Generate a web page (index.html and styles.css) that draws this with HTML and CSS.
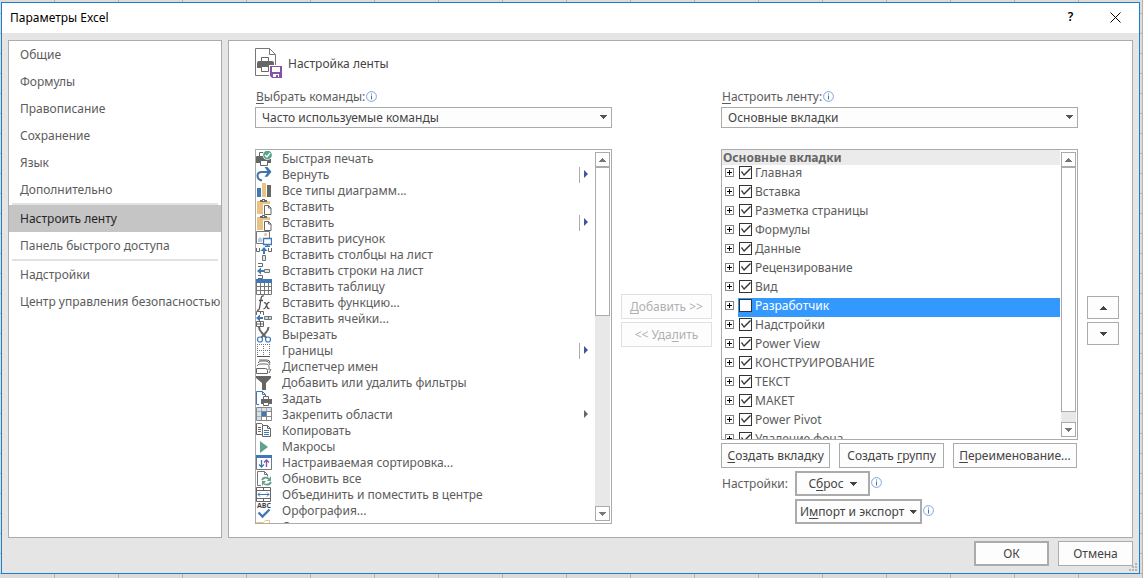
FILE: index.html
```html
<!DOCTYPE html>
<html lang="ru">
<head>
<meta charset="utf-8">
<title>Параметры Excel</title>
<link rel="stylesheet" href="styles.css">
</head>
<body>
<svg class="defs" aria-hidden="true">
  <symbol id="info" viewBox="0 0 11 11"><circle cx="5.5" cy="5.5" r="4.9" fill="#fff" stroke="#7fa3d6"/><path d="M5 2.5h1v1H5zM5 4.5h1v4H5z" fill="#3f74bd"/></symbol>
  <symbol id="down" viewBox="0 0 7 4"><path d="M0 0h7v1H6v1H5v1H4v1H3V3H2V2H1V1H0z" fill="currentColor"/></symbol>
  <symbol id="up" viewBox="0 0 7 4"><path d="M0 4h7V3H6V2H5V1H4V0H3v1H2v1H1v1H0z" fill="currentColor"/></symbol>
  <symbol id="paste" viewBox="0 0 16 16"><path d="M1 2h13v4H7v9H1z" fill="#eac282"/><path d="M4 3V1h2V0h3v1h2v2z" fill="#666"/><path d="M7 1h1v1H7z" fill="#fff"/><path d="M7 5h9v11H7z" fill="#fff"/><path d="M8.500 6.500h4l2.500 2.500v6.500H8.500zM12.500 6.500V9H15" fill="#fff" stroke="#666"/></symbol>
</svg>
<div class="dialog" role="dialog" aria-label="Параметры Excel">
  <header class="titlebar">
    <h1 class="caption">Параметры Excel</h1>
    <button class="tool help" aria-label="Справка">?</button>
    <button class="tool" aria-label="Закрыть"><svg width="11" height="11" viewBox="0 0 11 11"><path d="M.5.5l10 10M10.500.5l-10 10" stroke="#000"/></svg></button>
  </header>
  <div class="content">
    <nav class="sidebar">
      <a href="#general">Общие</a>
      <a href="#formulas">Формулы</a>
      <a href="#proofing">Правописание</a>
      <a href="#save">Сохранение</a>
      <a href="#language">Язык</a>
      <a href="#advanced">Дополнительно</a>
      <hr>
      <a href="#ribbon" class="current">Настроить ленту</a>
      <a href="#quick">Панель быстрого доступа</a>
      <hr>
      <a href="#addins">Надстройки</a>
      <a href="#trust">Центр управления безопасностью</a>
    </nav>
    <main class="panel">
      <div class="heading">
        <svg width="27" height="31" viewBox="0 0 27 31"><path d="M.5.5h14l6 6v21H.5z" fill="#fff" stroke="#777"/><path d="M14.500.5v6h6" fill="none" stroke="#777"/><path d="M4 13h13q2 0 2 2v5H2v-5q0-2 2-2z" fill="#666"/><path d="M6.500 9.500h7v4h-7zM6.500 18.500h7v5h-7z" fill="#fff" stroke="#666"/><path d="M14 17h13v14H14z" fill="#fff"/><path d="M15 18h12v12H17l-2-2z" fill="#8552a8"/><path d="M17 19h8v5h-8zM18 26h6v3h-1v-2h-2v2h-3z" fill="#fff"/></svg>
        <h2>Настройка ленты</h2>
      </div>
      <div class="columns">
        <section class="column">
          <div class="label-row"><label for="source"><u>В</u>ыбрать команды:</label><svg class="info"><use href="#info"/></svg></div>
          <div class="combo"><select id="source"><option>Часто используемые команды</option></select><svg class="arrow"><use href="#down"/></svg></div>
          <div class="list commands-list">
            <ul class="commands">
              <li><svg viewBox="0 0 16 16"><path d="M3.500 6V1.500h6V6" fill="#fff" stroke="#666"/><path d="M1 5h13q1 0 1 1v6H0V6q0-1 1-1z" fill="#666"/><path d="M4.500 9.500h7v5h-7z" fill="#fff" stroke="#666"/><circle cx="11.500" cy="4" r="5" fill="#fff"/><circle cx="11.500" cy="4" r="4.400" fill="#57a488"/><path d="M9 4l2 2 3-4" fill="none" stroke="#fff" stroke-width="1.300"/></svg>Быстрая печать</li>
              <li class="split"><svg viewBox="0 0 16 16"><path d="M6 13.500C0 12 0 5 6 5h6" fill="none" stroke="#3f74ad" stroke-width="2"/><path d="M8.500 0h3l4 4.700-4 5h-3L12 5z" fill="#3f74ad"/></svg>Вернуть<i></i></li>
              <li><svg viewBox="0 0 16 16"><path d="M1 5h4v9H1z" fill="#3f78b5"/><path d="M6 0h4v14H6z" fill="#eac282"/><path d="M11 2h4v12h-4z" fill="#666"/></svg>Все типы диаграмм...</li>
              <li><svg><use href="#paste"/></svg>Вставить</li>
              <li class="split"><svg><use href="#paste"/></svg>Вставить<i></i></li>
              <li><svg viewBox="0 0 16 16"><path d="M8 12.500H.5v-12h13V8" fill="#fff" stroke="#777"/><circle cx="9.500" cy="3.500" r="1.500" fill="#eac282"/><path d="M2 11V8l2-2 2 2v3z" fill="#b5cbe2"/><path d="M7.500 7.500h8v6h-8zM11.500 13.500v2M9 15.500h5" fill="#fff" stroke="#3f78b5" stroke-width="1.300"/></svg>Вставить рисунок</li>
              <li><svg viewBox="0 0 16 16"><path d="M.5 1v3.500h3V1M12.500 1v3.500h3V1" fill="none" stroke="#666"/><path d="M8 0l3.500 4H9v3H7V4H4.500z" fill="#3f78b5"/><path d="M6.500 8.500h3v5h-3z" fill="#dbe5f0" stroke="#777"/></svg>Вставить столбцы на лист</li>
              <li><svg viewBox="0 0 16 16"><path d="M2 .5h4.500v3H2M2 12.500h4.500v3H2" fill="none" stroke="#666"/><path d="M1 8l4-3.500V7h3v2H5v2.500z" fill="#3f78b5"/><path d="M8.500 6.500h5v3h-5z" fill="#dbe5f0" stroke="#777"/></svg>Вставить строки на лист</li>
              <li><svg viewBox="0 0 16 16"><path d="M.5.5h15v15H.5zM1 7.500h14M1 11.500h14M4.500 4v11M8.500 4v11M12.500 4v11" fill="#fff" stroke="#777"/><path d="M0 0h16v4H0z" fill="#3f78b5"/></svg>Вставить таблицу</li>
              <li><svg viewBox="0 0 16 16"><path d="M8 1Q5.500 0 5 4L3.500 13Q3 16 1 15M3 5.500h4M8 8q2-1 2.500 2l1 3q.5 1 2 0M13.500 7.500q-1-.5-2 1l-2 4q-1 1.500-2 1" fill="none" stroke="#555" stroke-width="1.300"/></svg>Вставить функцию...</li>
              <li><svg viewBox="0 0 16 16"><path d="M.5 4V.5h7V4M4.500.5V3M.5 10.500h7v5h-7zM4.500 10.500v5M.5 13h7" fill="none" stroke="#666"/><path d="M0 7l4-3.500V6h3v2H4v2.500z" fill="#3f78b5"/><path d="M8.500 5.500h7v3h-7zM12.500 5.500v3" fill="#c6d6e7" stroke="#777"/></svg>Вставить ячейки...</li>
              <li><svg viewBox="0 0 16 16"><path d="M3 0q0 3 3 6l4 4.500M12.500 0q0 3-3 6l-4 4.500" fill="none" stroke="#666" stroke-width="2"/><circle cx="4" cy="12.500" r="2.500" fill="#fff" stroke="#3f78b5" stroke-width="1.200"/><circle cx="12" cy="12.500" r="2.500" fill="#fff" stroke="#3f78b5" stroke-width="1.200"/></svg>Вырезать</li>
              <li class="split"><svg viewBox="0 0 16 16"><path d="M1 1.500h13M1 7.500h13M1.500 1v12M7.500 1v12M13.500 1v12" fill="none" stroke="#777" stroke-dasharray="1 1"/><path d="M1 13.500h13" stroke="#555"/></svg>Границы<i></i></li>
              <li><svg viewBox="0 0 16 16"><path d="M.5 9.500h9q2 0 2 2v3H.5zM1 7q1-2 3-2h6q4 0 3 6M2 4q1-2 3-2h5q3 0 4 4M3 1h8q3 0 3 3M13 14l2-4" fill="none" stroke="#666"/></svg>Диспетчер имен</li>
              <li><svg viewBox="0 0 16 16"><path d="M0 1h15v2l-5 5v7H6V8L0 3z" fill="#666"/></svg>Добавить или удалить фильтры</li>
              <li><svg viewBox="0 0 16 16"><path d="M3 13.500H.5V.5h6l3 3v2M6.500.5v3h3" fill="none" stroke="#3f78b5"/><path d="M5 8h11v5H5z" fill="#666"/><path d="M7.500 5.500h5v3h-5zM7.500 11.500h5v3h-5z" fill="#fff" stroke="#666"/></svg>Задать</li>
              <li class="sub"><svg viewBox="0 0 16 16"><path d="M.5.5h15v13H.5zM.5 4.500h15M.5 9.500h15M5.500.5v13M10.500.5v13" fill="#fff" stroke="#888"/><path d="M1 1h14v3H1zM1 4h4v9H1z" fill="#b8cbe0" opacity=".6"/><path d="M6 5h4v4H6z" fill="#3f78b5"/></svg>Закрепить области<i></i></li>
              <li><svg viewBox="0 0 16 16"><path d="M.5.5h5l2 2v9h-7zM2 4.500h3M2 6.500h3M2 8.500h3" fill="#fff" stroke="#666"/><path d="M6.500 2.500h5l3 3v8h-8zM11.500 2.500v3h3" fill="#fff" stroke="#666"/><path d="M8 7.500h5M8 9.500h5M8 11.500h5" stroke="#3f78b5"/></svg>Копировать</li>
              <li><svg viewBox="0 0 16 16"><path d="M4 2l8 6-8 6z" fill="#63a18c"/></svg>Макросы</li>
              <li><svg viewBox="0 0 16 16"><path d="M.5.5h15v14H.5z" fill="#fff" stroke="#777"/><path d="M0 0h16v3H0z" fill="#3f78b5"/><path d="M5.500 5v7M3 9.500l2.500 2.500L8 9.500" fill="none" stroke="#3f78b5" stroke-width="1.300"/><path d="M10.500 12V5M8 7.500L10.500 5 13 7.500" fill="none" stroke="#8552a8" stroke-width="1.300"/></svg>Настраиваемая сортировка...</li>
              <li><svg viewBox="0 0 16 16"><path d="M5 14.500H1.500V.5h7l3 3v2M8.500.5v3h3" fill="none" stroke="#777"/><path d="M6 9q2-4 7-1M15 11q-2 4-7 2" fill="none" stroke="#63a18c" stroke-width="1.800"/><path d="M15 5v5h-4zM6 15v-5h4z" fill="#63a18c"/></svg>Обновить все</li>
              <li><svg viewBox="0 0 16 16"><path d="M.5.5h14v14H.5zM.5 3.500h14M.5 11.500h14M7.500.5v3M7.500 11.500v3" fill="#fff" stroke="#666"/><path d="M2 7.500h11M4 5.500l-2 2 2 2M11 5.500l2 2-2 2" fill="none" stroke="#3f78b5"/></svg>Объединить и поместить в центре</li>
              <li><svg viewBox="0 0 16 16"><text x="1" y="5" class="abc">ABC</text><path d="M2.500 9.500l4 4 7-7" fill="none" stroke="#3f78b5" stroke-width="2.400"/></svg>Орфография...</li>
              <li><svg viewBox="0 0 16 16"><path d="M.5 15V3.500h7l2-2h4V15z" fill="#fff" stroke="#eac282"/></svg>Открыть</li>
            </ul>
            <div class="scrollbar"><button aria-label="Вверх"><svg><use href="#up"/></svg></button><div class="track"><div class="thumb source-thumb"></div></div><button aria-label="Вниз"><svg><use href="#down"/></svg></button></div>
          </div>
        </section>
        <div class="transfer">
          <button class="btn" disabled><span><u>Д</u>обавить &gt;&gt;</span></button>
          <button class="btn" disabled><span>&lt;&lt; Уда<u>л</u>ить</span></button>
        </div>
        <section class="column">
          <div class="label-row"><label for="target"><u>Н</u>астроить ленту:</label><svg class="info"><use href="#info"/></svg></div>
          <div class="combo"><select id="target"><option>Основные вкладки</option></select><svg class="arrow"><use href="#down"/></svg></div>
          <div class="list">
            <div class="tree">
              <h3>Основные вкладки</h3>
              <ul>
                <li><button class="plus" aria-label="Развернуть"></button><label><input type="checkbox" checked>Главная</label></li>
                <li><button class="plus" aria-label="Развернуть"></button><label><input type="checkbox" checked>Вставка</label></li>
                <li><button class="plus" aria-label="Развернуть"></button><label><input type="checkbox" checked>Разметка страницы</label></li>
                <li><button class="plus" aria-label="Развернуть"></button><label><input type="checkbox" checked>Формулы</label></li>
                <li><button class="plus" aria-label="Развернуть"></button><label><input type="checkbox" checked>Данные</label></li>
                <li><button class="plus" aria-label="Развернуть"></button><label><input type="checkbox" checked>Рецензирование</label></li>
                <li><button class="plus" aria-label="Развернуть"></button><label><input type="checkbox" checked>Вид</label></li>
                <li><button class="plus" aria-label="Развернуть"></button><label class="selected"><input type="checkbox">Разработчик</label></li>
                <li><button class="plus" aria-label="Развернуть"></button><label><input type="checkbox" checked>Надстройки</label></li>
                <li><button class="plus" aria-label="Развернуть"></button><label><input type="checkbox" checked>Power View</label></li>
                <li><button class="plus" aria-label="Развернуть"></button><label><input type="checkbox" checked>КОНСТРУИРОВАНИЕ</label></li>
                <li><button class="plus" aria-label="Развернуть"></button><label><input type="checkbox" checked>ТЕКСТ</label></li>
                <li><button class="plus" aria-label="Развернуть"></button><label><input type="checkbox" checked>МАКЕТ</label></li>
                <li><button class="plus" aria-label="Развернуть"></button><label><input type="checkbox" checked>Power Pivot</label></li>
                <li><button class="plus" aria-label="Развернуть"></button><label><input type="checkbox" checked>Удаление фона</label></li>
              </ul>
            </div>
            <div class="scrollbar"><button aria-label="Вверх"><svg><use href="#up"/></svg></button><div class="track"><div class="thumb target-thumb"></div></div><button aria-label="Вниз"><svg><use href="#down"/></svg></button></div>
          </div>
          <div class="tab-buttons">
            <button class="btn new-tab"><span><u>С</u>оздать вкладку</span></button>
            <button class="btn new-group"><span>Создать <u>г</u>руппу</span></button>
            <button class="btn rename"><span><u>П</u>ереименование...</span></button>
          </div>
          <div class="settings">
            <span class="settings-label">Настройки:</span>
            <div class="menus">
              <div class="menu-row"><button class="btn strong reset"><span>С<u>б</u>рос</span><svg class="caret"><use href="#down"/></svg></button><svg class="info"><use href="#info"/></svg></div>
              <div class="menu-row"><button class="btn strong import"><span>И<u>м</u>порт и экспорт</span><svg class="caret"><use href="#down"/></svg></button><svg class="info"><use href="#info"/></svg></div>
            </div>
          </div>
        </section>
        <div class="order">
          <button class="btn" aria-label="Переместить вверх"><svg class="caret"><use href="#up"/></svg></button>
          <button class="btn" aria-label="Переместить вниз"><svg class="caret"><use href="#down"/></svg></button>
        </div>
      </div>
    </main>
  </div>
  <footer class="footer">
    <button class="btn strong">ОК</button>
    <button class="btn">Отмена</button>
  </footer>
  <svg class="grip" width="8" height="8" viewBox="0 0 8 8"><path d="M6 0h2v2H6zM3 3h2v2H3zM6 3h2v2H6zM0 6h2v2H0zM3 6h2v2H3zM6 6h2v2H6z" fill="#b4b4b4"/></svg>
</div>
</body>
</html>
```
FILE: styles.css
```css
* { box-sizing: border-box; }

body {
  margin: 0;
  height: 100vh;
  padding: 2px 3px 4px 1px;
  display: flex;
  font: 12px/16px "Noto Sans", "Open Sans", sans-serif;
  color: #5c5c5c;
  background-color: #dcdcdc;
  background-image:
    linear-gradient(90deg, #b4b4b4 1px, transparent 1px),
    linear-gradient(#b4b4b4 1px, transparent 1px);
  background-size: 64px 64px, 20px 20px;
  background-position: 54px 0, 0 13px;
}

button, select, input { font: inherit; color: inherit; margin: 0; }
h1, h2, h3, ul { margin: 0; padding: 0; font: inherit; list-style: none; }
u { text-underline-offset: 2px; }
.defs { position: absolute; width: 0; height: 0; }

.dialog {
  position: relative;
  flex: 1;
  min-width: 0;
  display: flex;
  flex-direction: column;
  border: 1px solid #1b7fd0;
  background: #e5e5e5;
}

.titlebar {
  display: flex;
  align-items: center;
  height: 30px;
  padding: 0 8px;
  background: #fff;
  color: #000;
}
.caption { flex: 1; }
.tool {
  width: 31px;
  height: 30px;
  padding: 0 0 2px;
  border: 0;
  background: none;
  display: flex;
  align-items: center;
  justify-content: center;
}
.help { width: 59px; font-weight: 600; }

.content {
  flex: 1;
  min-height: 0;
  display: flex;
  gap: 6px;
  padding: 7px 6px 3px;
}
.sidebar, .panel { background: #fff; border: 1px solid #ababab; }
.sidebar { width: 214px; }
.sidebar a {
  display: block;
  padding: 0 0 0 11px;
  line-height: 27px;
  color: inherit;
  text-decoration: none;
  white-space: nowrap;
}
.sidebar .current { background: #c5c5c5; color: #262626; }
.sidebar hr { height: 2px; margin: 0 3px; border: 0; background: #e1e1e1; }

.panel {
  flex: 1;
  min-width: 0;
  display: flex;
  flex-direction: column;
  padding: 7px 13px 13px 26px;
}
.heading { display: flex; align-items: center; gap: 6px; margin-bottom: 9px; }
.heading h2 { color: #444; }

.columns {
  flex: 1;
  min-height: 0;
  display: grid;
  grid-template-columns: minmax(0, 1fr) 91px minmax(0, 1fr) 32px;
  grid-template-rows: minmax(0, 1fr);
  gap: 9px;
}
.column { display: flex; flex-direction: column; min-height: 0; }
.label-row { display: flex; align-items: center; gap: 1px; height: 19px; padding: 0 0 2px 1px; }
.info { width: 11px; height: 11px; }

.combo { position: relative; margin-bottom: 21px; }
.combo select {
  display: block;
  width: 100%;
  height: 21px;
  padding: 0 6px;
  appearance: none;
  border: 1px solid #ababab;
  border-radius: 0;
  background: #fdfdfd;
  color: #444;
}
.arrow { position: absolute; right: 5px; top: 8px; width: 7px; height: 4px; color: #555; pointer-events: none; }

.list {
  flex: 1;
  min-height: 0;
  display: flex;
  border: 1px solid #ababab;
  overflow: hidden;
}
.commands, .tree { flex: 1; min-width: 0; overflow: hidden; }
.tree { margin-right: 1px; }
.commands { padding-top: 1px; }
.commands li { display: flex; align-items: center; height: 16px; padding-right: 6px; white-space: nowrap; }
.commands svg { width: 16px; height: 16px; margin-right: 10px; flex: none; }
.commands i {
  margin-left: auto;
  width: 10px;
  height: 16px;
  background: #666;
  clip-path: polygon(5px 3px, 9px 7px, 5px 11px);
}
.commands .split i {
  background: linear-gradient(90deg, #ababab 2px, #3a55a5 2px);
  clip-path: polygon(0 0, 1px 0, 1px 7px, 5px 7px, 5px 3px, 9px 7px, 5px 11px, 5px 7px, 1px 7px, 1px 16px, 0 16px);
}
.abc { font: bold 7px "Open Sans", sans-serif; fill: #444; }

.scrollbar { width: 15px; margin: 2px 1px 2px 0; display: flex; flex-direction: column; background: #e8e8e8; }
.scrollbar button {
  height: 15px;
  padding: 0;
  display: flex;
  align-items: center;
  justify-content: center;
  border: 1px solid #ababab;
  background: #fff;
  color: #777;
}
.scrollbar svg { width: 7px; height: 4px; }
.track { flex: 1; min-height: 0; }
.thumb { border: 1px solid #ababab; background: #fff; }
.source-thumb { height: 44%; }
.target-thumb { height: 96%; }

.tree h3 { height: 15px; line-height: 15px; padding-left: 1px; font-weight: 700; background: #ebebeb; color: #666; }
.tree li { display: flex; align-items: center; height: 19px; gap: 4px; padding-left: 3px; }
.tree label { flex: 1; display: flex; align-items: center; gap: 3px; height: 19px; padding: 0 0 4px 1px; }
.tree .selected { background: #3399ff; color: #fff; }
.plus {
  width: 9px;
  height: 9px;
  padding: 0;
  margin-bottom: 4px;
  border: 1px solid #848484;
  background:
    linear-gradient(#000, #000) center / 5px 1px no-repeat,
    linear-gradient(#000, #000) center / 1px 5px no-repeat,
    #fff;
}
.tree input { appearance: none; width: 13px; height: 13px; border: 1px solid #333; background: #fff; }
.tree input:checked::before {
  content: "";
  display: block;
  height: 11px;
  background: #333;
  clip-path: polygon(1px 5px, 2px 4px, 4px 7px, 10px 1px, 11px 2px, 4px 9px);
}

.btn {
  height: 25px;
  padding: 0 3px;
  display: flex;
  align-items: center;
  justify-content: center;
  border: 1px solid #ababab;
  background: #fdfdfd;
  color: #444;
  white-space: nowrap;
}
.btn.strong { border-width: 2px; }
.btn:disabled { color: #b1b1b1; border-color: #e1e1e1; }
.caret { width: 7px; height: 4px; }

.transfer, .order { display: flex; flex-direction: column; gap: 3px; }
.transfer { padding-top: 206px; }
.order { padding-top: 208px; }
.order .btn { height: 23px; }

.tab-buttons { display: flex; gap: 9px; margin: 3px 1px 3px 0; }
.new-tab { flex: 109; }
.new-group { flex: 104; }
.rename { flex: 125; }
.settings { display: flex; padding-left: 1px; }
.settings-label { width: 73px; line-height: 25px; }
.menus { display: flex; flex-direction: column; gap: 3px; }
.menu-row { display: flex; align-items: center; gap: 1px; }
.menu-row .btn { gap: 6px; }
.menu-row .info { margin-bottom: 2px; }
.reset { width: 75px; }
.import { width: 127px; }

.footer { display: flex; justify-content: flex-end; gap: 9px; padding: 0 6px 7px; }
.footer .btn { width: 75px; }
.grip { position: absolute; right: 2px; bottom: 2px; }
```
